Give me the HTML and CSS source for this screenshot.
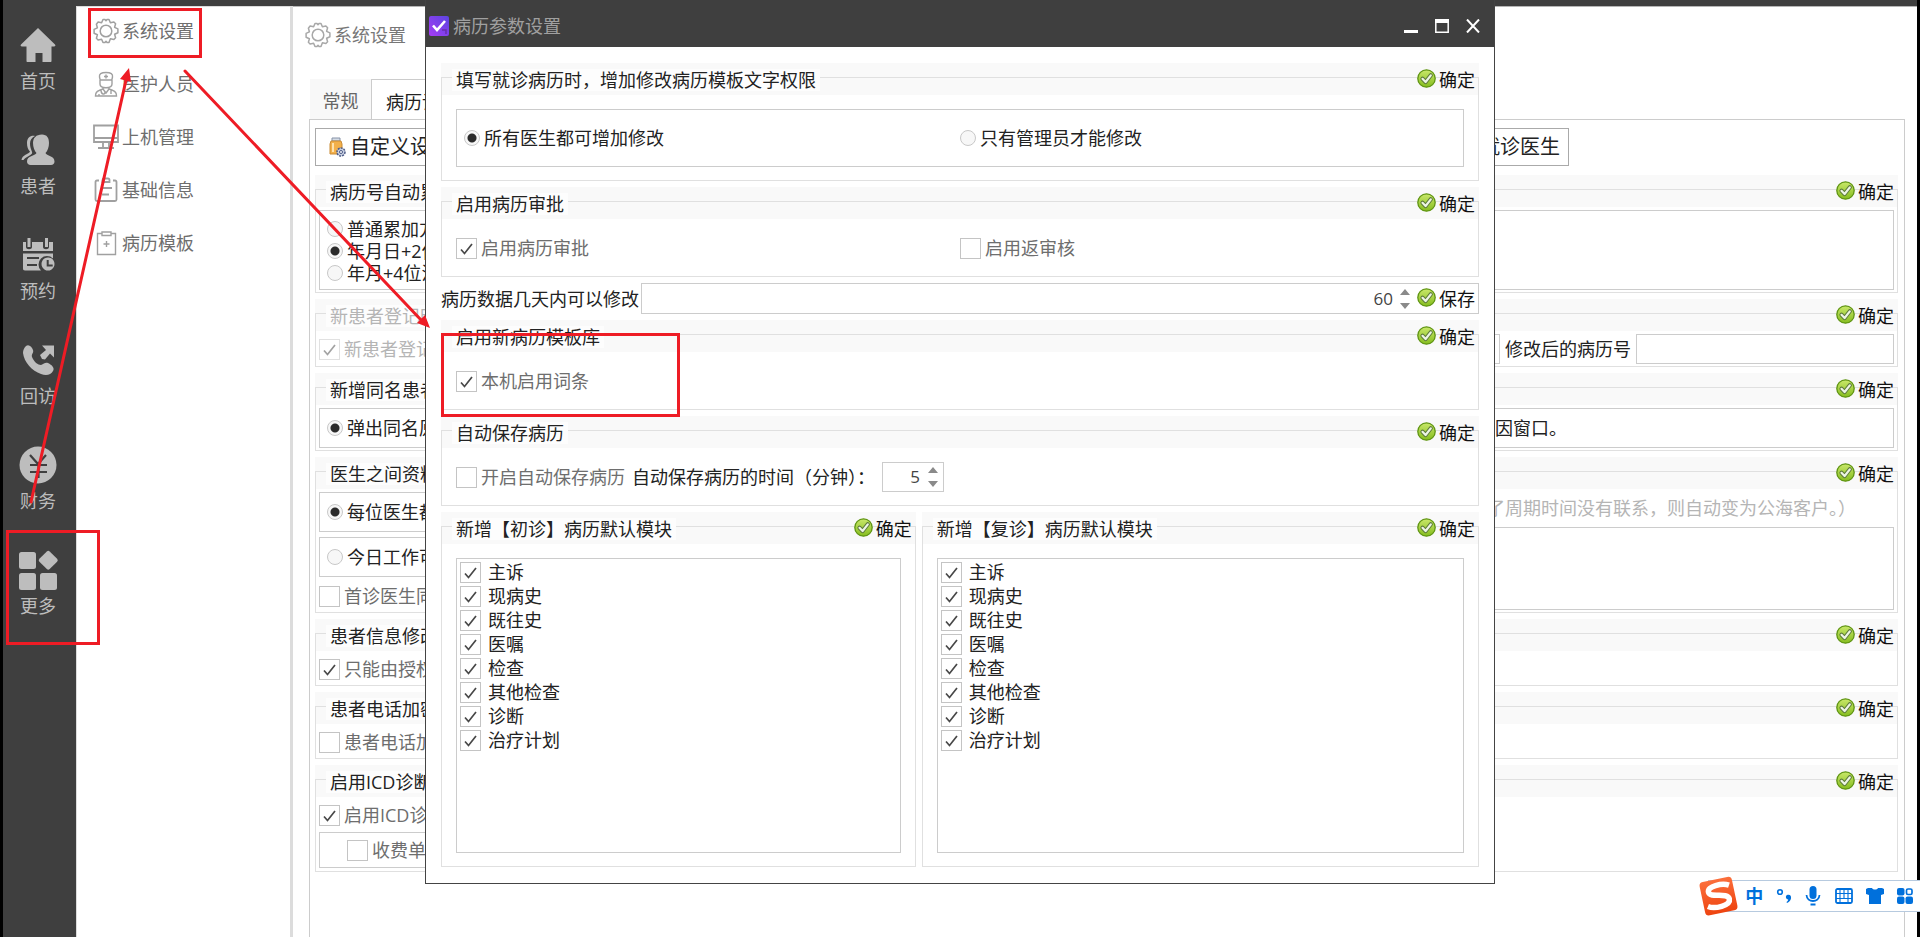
FILE: index.html
```html
<!DOCTYPE html>
<html lang="zh-CN">
<head>
<meta charset="utf-8">
<title>病历参数设置</title>
<link rel="stylesheet" href="styles.css">
</head>
<body>
<svg class="defs" aria-hidden="true">
  <defs>
    <linearGradient id="okfill" x1="0" y1="0" x2="0" y2="1">
      <stop offset="0" stop-color="#c9e86a"/><stop offset="1" stop-color="#86bd1f"/>
    </linearGradient>
    <linearGradient id="appfill" x1="1" y1="0" x2="0" y2="1">
      <stop offset="0" stop-color="#5b45e0"/><stop offset="1" stop-color="#a63cf5"/>
    </linearGradient>
    <linearGradient id="imefill" x1="0" y1="0" x2="0" y2="1">
      <stop offset="0" stop-color="#fb6f3c"/><stop offset="1" stop-color="#ee4410"/>
    </linearGradient>
    <symbol id="ok" viewBox="0 0 19 19">
      <circle cx="9.500" cy="9.500" r="8.700" fill="url(#okfill)" stroke="#5f9413" stroke-width="1.300"/>
      <path d="M5.500 9.800 8.600 13 13.800 6.300" fill="none" stroke="#5c7a3c" stroke-width="4.200" stroke-linecap="round" stroke-linejoin="round"/>
      <path d="M5.500 9.800 8.600 13 13.800 6.300" fill="none" stroke="#edf5e4" stroke-width="2.200" stroke-linecap="round" stroke-linejoin="round"/>
    </symbol>
    <symbol id="gear" viewBox="0 0 26 26">
      <g fill="none" stroke="currentColor" stroke-width="1.500" stroke-linejoin="round">
        <path d="M10 1.500h2l1 1.200 1-1.200h2l1.400 3.300 3.500-.8 1.700 1.700-1 3.600 3.300 1.600v3.800l-3.300 1.500 1 3.600-1.700 1.700-3.500-.8L16 24.500h-2l-1-1.200-1 1.200h-2l-1.400-3.300-3.500.8-1.700-1.700 1-3.600-3.300-1.500v-3.800l3.300-1.600-1-3.600L5.100 4l3.500.8z"/>
        <circle cx="13" cy="13" r="5.800"/>
      </g>
    </symbol>
    <symbol id="spin" viewBox="0 0 10 22">
      <path d="M0 7 5 1l5 6zM0 15h10l-5 6z" fill="#8a8a8a"/>
    </symbol>
  </defs>
</svg>

<div class="app">
  <nav class="rail" aria-label="主导航">
    <button type="button"><svg width="38" height="38" viewBox="0 0 38 38"><path d="M19 2 36 18.500c.8 1 .3 2-1 2h-2.500V35c0 .6-.4 1-1 1h-8v-9h-7v9h-8c-.6 0-1-.4-1-1V20.500H3c-1.300 0-1.800-1-1-2z"/></svg>首页</button>
    <button type="button"><svg width="38" height="38" viewBox="0 0 38 38"><path d="M16 5c-4-1-8 1.500-8 7 0 4 1 6.500 3 8.500-1 3-8 3-8.500 8.500h2c2-3 7-4.500 8.500-6.500 1-1.500-2-4.500-2-10 0-3.500 2-6 5-7.500z"/><path d="M23 3.500c5 0 7 3.500 7 8.500 0 4-1.500 8-3.500 10 1 3 9 2.500 9 8.500 0 2-1.500 3.500-3.500 3.500H11.500c-2 0-3.500-1.500-3.500-3.500 0-6 8-5.500 9.500-8.500-2-2-3.500-6-3.500-10 0-5 3-8.500 9-8.500z"/></svg>患者</button>
    <button type="button"><svg width="38" height="38" viewBox="0 0 38 38"><path d="M4 6h3v5c0 3 6 3 6 0V6h11v5c0 3 6 3 6 0V6h4v9H4zM4 17.500h30v5a8 8 0 0 0-12 12H6c-1.500 0-2-1-2-2zM8 21v2h12v-2zm0 7v2h10v-2z" fill-rule="evenodd"/><path d="M8.500 2h3v9h-3zM26 2h3v9h-3z"/><path d="M29 21.500a6.500 6.500 0 1 0 .01 0zm-1.300 2.500h2v4.500h4v2h-6z" fill-rule="evenodd"/></svg>预约</button>
    <button type="button"><svg width="38" height="38" viewBox="0 0 38 38"><path d="M7 5c3-2 6 1 7 4s-2 4-1 7c2 5 6 8 9 8 3-1 4-3 7-2 4 2 7 5 5 8-2 4-7 5-12 3C13 30 5 21 4 12c0-3 1-5 3-7z"/><path d="m21 14 6-5-4-4.500h12v12l-4-4-5 6-3-.5z"/></svg>回访</button>
    <button type="button"><svg width="38" height="38" viewBox="0 0 38 38"><circle cx="19" cy="19" r="18.500"/><path d="M11 9l8 9 8-9M11 19h17M11 26h17M19.500 18v14" fill="none" stroke="#3f3f3f" stroke-width="2.200"/></svg>财务</button>
    <button type="button"><svg width="38" height="38" viewBox="0 0 38 38"><rect x="0" y="1" width="17" height="17" rx="2.500"/><rect x="0" y="22" width="17" height="17" rx="2.500"/><rect x="21" y="22" width="17" height="17" rx="2.500"/><rect x="22" y="2" width="14.500" height="14.500" rx="2" transform="rotate(45 29.250 9.250)"/></svg>更多</button>
  </nav>

  <nav class="menu" aria-label="更多">
    <button type="button"><svg width="26" height="26"><use href="#gear"/></svg>系统设置</button>
    <button type="button"><svg width="26" height="26" viewBox="0 0 26 26"><path d="M6.500 6C6 3 8 1.500 13 1.500S20 3 19.500 6l-.7 3H7.200zM7 9v4c0 5 12 5 12 0V9M13 3.500v4M11 5.500h4M10 16v2l-4 1.500C3 20.500 2.500 22 2.500 25h21c0-3-.5-4.500-3.500-5.500L16 18v-2M8 19c0 5 4 5 4 2M18 19v4M6 25v-2M10 18l3 4 3-4"/></svg>医护人员</button>
    <button type="button"><svg width="26" height="26" viewBox="0 0 26 26"><path d="M1 1.500h24V18H1zM1 14h24M10 18v5M16 18v5M5 24h16" stroke-width="1.800"/></svg>上机管理</button>
    <button type="button"><svg width="26" height="26" viewBox="0 0 26 26"><path d="M6 3.500H4C3 3.500 2.500 4 2.500 5v17.500c0 1 .5 1.500 1.500 1.500h18c1 0 1.500-.5 1.500-1.500V5c0-1-.5-1.500-1.500-1.500h-2M9.500 5h7V3c0-1-.5-1.500-1.500-1.500h-4c-1 0-1.500.5-1.500 1.500zM9 11h10M9 17.500h7" stroke-width="1.800"/></svg>基础信息</button>
    <button type="button"><svg width="26" height="26" viewBox="0 0 26 26"><path d="M9 3.500H4.500V24.500h18V3.500H18M9 2h9v3.500H9zM13.500 11v6M10.500 14h6"/></svg>病历模板</button>
  </nav>

  <main class="main">
    <h1 class="crumb"><svg width="26" height="26"><use href="#gear"/></svg>系统设置</h1>
    <div class="tabs" role="tablist">
      <button type="button" role="tab" aria-selected="false">常规</button>
      <button type="button" role="tab" aria-selected="true">病历设置</button>
    </div>
    <div class="panel">
      <div class="actions">
        <button type="button" class="big"><svg width="17" height="20" viewBox="0 0 17 20"><path d="M3 1h8v3H3z" fill="#d5dce6" stroke="#8793a8"/><path d="M2 4h10l1 3v10H1V7z" fill="#f3b04a" stroke="#c98b35"/><path d="M4 6v9" stroke="#ffe2ad" stroke-width="2"/><circle cx="12" cy="15" r="4" fill="#c8d0e2" stroke="#4c5a86" stroke-width="1.500" stroke-dasharray="2 1"/><circle cx="12" cy="15" r="1.500" fill="#fff" stroke="#4c5a86"/></svg>自定义设置</button>
        <button type="button" class="big doctor">就诊医生</button>
      </div>

      <section class="group">
        <header><h2>病历号自动累加</h2><button type="button" class="ok"><svg width="19" height="19"><use href="#ok"/></svg>确定</button></header>
        <div class="body"><div class="box radios">
          <label><input type="radio" name="no">普通累加方式</label>
          <label><input type="radio" name="no" checked>年月日+2位</label>
          <label><input type="radio" name="no">年月+4位流</label>
        </div></div>
      </section>

      <section class="group">
        <header class="off"><h2>新患者登记时</h2><button type="button" class="ok"><svg width="19" height="19"><use href="#ok"/></svg>确定</button></header>
        <div class="body line">
          <label class="check off"><input type="checkbox" checked disabled>新患者登记</label>
          <div class="fields">
            <input type="text" class="field old" aria-label="修改前的病历号">
            <label for="newno">修改后的病历号</label>
            <input type="text" class="field new" id="newno">
          </div>
        </div>
      </section>

      <section class="group">
        <header><h2>新增同名患者</h2><button type="button" class="ok"><svg width="19" height="19"><use href="#ok"/></svg>确定</button></header>
        <div class="body"><div class="box row40">
          <label><input type="radio" name="same" checked>弹出同名原</label><span class="tail">因窗口。</span>
        </div></div>
      </section>

      <section class="group">
        <header><h2>医生之间资料</h2><button type="button" class="ok"><svg width="19" height="19"><use href="#ok"/></svg>确定</button></header>
        <div class="body halves">
          <div class="stack">
            <div class="box row40"><label><input type="radio" name="share" checked>每位医生都</label></div>
            <div class="box row40"><label><input type="radio" name="share">今日工作可</label></div>
            <label class="check"><input type="checkbox">首诊医生同</label>
          </div>
          <div class="note"><p>了周期时间没有联系，则自动变为公海客户。）</p><div class="box"></div></div>
        </div>
      </section>

      <section class="group">
        <header><h2>患者信息修改</h2><button type="button" class="ok"><svg width="19" height="19"><use href="#ok"/></svg>确定</button></header>
        <div class="body single"><label class="check"><input type="checkbox" checked>只能由授权</label></div>
      </section>

      <section class="group">
        <header><h2>患者电话加密</h2><button type="button" class="ok"><svg width="19" height="19"><use href="#ok"/></svg>确定</button></header>
        <div class="body single"><label class="check"><input type="checkbox">患者电话加</label></div>
      </section>

      <section class="group">
        <header><h2>启用ICD诊断</h2><button type="button" class="ok"><svg width="19" height="19"><use href="#ok"/></svg>确定</button></header>
        <div class="body single">
          <label class="check"><input type="checkbox" checked>启用ICD诊</label>
          <div class="box sub"><label class="check"><input type="checkbox">收费单</label></div>
        </div>
      </section>
    </div>
  </main>
</div>

<div class="dialog" role="dialog" aria-labelledby="dlg-title">
  <div class="titlebar">
    <svg width="20" height="20" viewBox="0 0 20 20"><rect width="20" height="20" rx="2" fill="url(#appfill)"/><path d="M13 14h4v4" fill="none" stroke="#6a2cae" stroke-width="1.500"/><path d="m4 9.500 4 4.500 8-9" fill="none" stroke="#fff" stroke-width="2.600"/></svg>
    <h2 id="dlg-title">病历参数设置</h2>
    <div class="winbtns">
      <button type="button" aria-label="最小化"><svg width="14" height="14" viewBox="0 0 14 14"><path d="M0 12.500h14" stroke-width="3"/></svg></button>
      <button type="button" aria-label="最大化"><svg width="14" height="14" viewBox="0 0 14 14"><path d="M.8 1v12.200h12.400V1" stroke-width="1.500"/><path d="M0 2h14" stroke-width="4"/></svg></button>
      <button type="button" aria-label="关闭"><svg width="14" height="14" viewBox="0 0 14 14"><path d="m1 .5 12 13M13 .5l-12 13" stroke-width="2"/></svg></button>
    </div>
  </div>

  <form class="content">
    <section class="group">
      <header><h3>填写就诊病历时，增加修改病历模板文字权限</h3><button type="button" class="ok"><svg width="19" height="19"><use href="#ok"/></svg>确定</button></header>
      <div class="pad"><div class="box perms">
        <label><input type="radio" name="perm" checked>所有医生都可增加修改</label>
        <label><input type="radio" name="perm">只有管理员才能修改</label>
      </div></div>
    </section>

    <section class="group">
      <header><h3>启用病历审批</h3><button type="button" class="ok"><svg width="19" height="19"><use href="#ok"/></svg>确定</button></header>
      <div class="pad checks">
        <label class="check"><input type="checkbox" checked>启用病历审批</label>
        <label class="check"><input type="checkbox">启用返审核</label>
      </div>
    </section>

    <div class="days">
      <label for="days">病历数据几天内可以修改</label>
      <div class="daybox">
        <input type="number" id="days" value="60">
        <svg width="10" height="22"><use href="#spin"/></svg>
        <button type="button" class="ok"><svg width="19" height="19"><use href="#ok"/></svg>保存</button>
      </div>
    </div>

    <section class="group">
      <header><h3>启用新病历模板库</h3><button type="button" class="ok"><svg width="19" height="19"><use href="#ok"/></svg>确定</button></header>
      <div class="pad checks"><label class="check"><input type="checkbox" checked>本机启用词条</label></div>
    </section>

    <section class="group">
      <header><h3>自动保存病历</h3><button type="button" class="ok"><svg width="19" height="19"><use href="#ok"/></svg>确定</button></header>
      <div class="pad auto">
        <label class="check"><input type="checkbox">开启自动保存病历</label>
        <label for="mins">自动保存病历的时间（分钟）：</label>
        <div class="minbox"><input type="number" id="mins" value="5"><svg width="10" height="22"><use href="#spin"/></svg></div>
      </div>
    </section>

    <div class="lists">
      <section class="group">
        <header><h3>新增【初诊】病历默认模块</h3><button type="button" class="ok"><svg width="19" height="19"><use href="#ok"/></svg>确定</button></header>
        <div class="pad"><div class="box list">
          <label><input type="checkbox" checked>主诉</label>
          <label><input type="checkbox" checked>现病史</label>
          <label><input type="checkbox" checked>既往史</label>
          <label><input type="checkbox" checked>医嘱</label>
          <label><input type="checkbox" checked>检查</label>
          <label><input type="checkbox" checked>其他检查</label>
          <label><input type="checkbox" checked>诊断</label>
          <label><input type="checkbox" checked>治疗计划</label>
        </div></div>
      </section>
      <section class="group">
        <header><h3>新增【复诊】病历默认模块</h3><button type="button" class="ok"><svg width="19" height="19"><use href="#ok"/></svg>确定</button></header>
        <div class="pad"><div class="box list">
          <label><input type="checkbox" checked>主诉</label>
          <label><input type="checkbox" checked>现病史</label>
          <label><input type="checkbox" checked>既往史</label>
          <label><input type="checkbox" checked>医嘱</label>
          <label><input type="checkbox" checked>检查</label>
          <label><input type="checkbox" checked>其他检查</label>
          <label><input type="checkbox" checked>诊断</label>
          <label><input type="checkbox" checked>治疗计划</label>
        </div></div>
      </section>
    </div>
  </form>
</div>

<div class="ime">
  <svg class="imelogo" width="42" height="42" viewBox="0 0 42 42">
    <g transform="rotate(-12 21 21)"><rect x="4" y="4" width="33" height="34" rx="4" fill="url(#imefill)"/>
    <path d="M33 12.500C27 9 11 8.500 11.500 15.500 12 21.500 30.500 18.500 30.500 26 30.500 33 14 33 8 29" fill="none" stroke="#fff" stroke-width="5.500"/></g>
  </svg>
  <span class="zh">中</span>
  <svg width="16" height="18" viewBox="0 0 16 18"><circle cx="4" cy="5" r="2.300" fill="none" stroke="#0070dc" stroke-width="1.600"/><path d="M11 8c3-1 4.500 1 4 3.500-.5 2-2 3.500-4 4.500l-.5-1c1-.7 1.700-1.500 1.700-2.500C10 12.500 9 9 11 8z" fill="#0070dc"/></svg>
  <svg width="16" height="20" viewBox="0 0 16 20"><rect x="4.500" y="0" width="7" height="13" rx="3.500" fill="#0070dc"/><path d="M1.500 9c.5 8 12.500 8 13 0M5.500 18.500h5" fill="none" stroke="#0070dc" stroke-width="1.800"/></svg>
  <svg width="18" height="16" viewBox="0 0 18 16"><rect x="1" y="1" width="16" height="14" rx="1.500" fill="none" stroke="#0070dc" stroke-width="1.800"/><path d="M1 5.500h16M1 10.500h16M5 1v14M9 1v9.500M13 1v14" fill="none" stroke="#0070dc" stroke-width="1.100"/></svg>
  <svg width="18" height="18" viewBox="0 0 18 18"><path d="M0 2l2-1h4c1 2 5 2 6 0h4l2 1v5l-3 1v9H3V8L0 7z" fill="#0070dc"/></svg>
  <svg width="16" height="16" viewBox="0 0 16 16"><rect width="7.500" height="7.500" rx="2" fill="#0070dc"/><rect y="8.500" width="7.500" height="7.500" rx="2" fill="#0070dc"/><rect x="8.500" y="8.500" width="7.500" height="7.500" rx="2" fill="#0070dc"/><rect x="9.500" y="1" width="5.500" height="5.500" rx="1.500" fill="none" stroke="#0070dc" stroke-width="1.700"/></svg>
</div>

<svg class="marks" aria-hidden="true">
  <g fill="none" stroke="#ee1c25" stroke-width="3">
    <rect x="89.500" y="9.500" width="111" height="47"/>
    <rect x="7.500" y="531.500" width="91" height="112"/>
    <rect x="442.500" y="334.500" width="236" height="81"/>
    <path d="M31 502 126.500 78M185 71 422 321" stroke-linecap="round"/>
  </g>
  <path d="M129 68l2 14-11-3zM430 328l-13-5 8-8z" fill="#ee1c25"/>
</svg>
</body>
</html>
```
FILE: styles.css
```css
* { box-sizing: border-box; }

body {
  margin: 0;
  height: 100vh;
  overflow: hidden;
  position: relative;
  background: #3f3f3f;
  font: 18px/22px "Open Sans", "Noto Sans CJK SC", sans-serif;
  color: #222;
}

h1, h2, h3, p { margin: 0; font: inherit; }
svg { flex: none; display: block; }
button { font: inherit; color: inherit; background: none; border: 0; padding: 0; margin: 0; }
input { font: inherit; color: inherit; margin: 0; }
.defs { position: absolute; width: 0; height: 0; }

/* Application frame */
.app {
  display: flex;
  height: 100vh;
  padding-top: 6px;
  border-left: 3px solid #000;
  border-right: 3px solid #000;
}

.rail { width: 73px; flex: none; display: flex; flex-direction: column; padding-right: 3px; color: #bdbdbd; }
.rail svg { fill: #bdbdbd; overflow: visible; }
.rail button {
  display: flex;
  flex-direction: column;
  align-items: center;
  gap: 6px;
  padding: 20px 0 19px;
}

.menu {
  width: 217px;
  flex: none;
  background: #fff;
  border: solid #dcdcdc;
  border-width: 1px 3px 0 1px;
  display: flex;
  flex-direction: column;
  gap: 27px;
  padding: 11px 16px;
  color: #6e6e6e;
}
.menu button { display: flex; align-items: center; gap: 3px; }
.menu svg { fill: none; stroke: #a0a0a0; stroke-width: 1.4; color: #a0a0a0; }

.main {
  flex: 1;
  min-width: 0;
  background: #fff;
  border-top: 1px solid #b5b5b5;
  padding: 0 12px 0 16px;
  display: flex;
  flex-direction: column;
}
.crumb {
  display: flex;
  align-items: flex-start;
  gap: 3px;
  height: 72px;
  padding-top: 15px;
  line-height: 26px;
  color: #777;
}
.crumb svg { color: #a8a8a8; margin-left: -4px; }

.tabs { display: flex; height: 40px; padding-left: 1px; }
.tabs button { width: 61px; background: #f8f8f8; color: #666; padding-top: 3px; }
.tabs [aria-selected="true"] {
  width: 102px;
  background: #fff;
  color: #222;
  border: 1px solid #ccc;
  border-bottom: 0;
  margin-bottom: -1px;
}

.panel {
  flex: 1;
  border: 1px solid #ccc;
  border-bottom: 0;
  padding: 8px 6px 0 5px;
  display: flex;
  flex-direction: column;
  gap: 6px;
}

.actions { display: flex; justify-content: space-between; padding-bottom: 3px; }
.big {
  height: 38px;
  border: 1px solid #aaa;
  background: #fff;
  font-size: 20px;
  display: flex;
  align-items: center;
  gap: 4px;
  padding: 0 8px 0 13px;
}
.doctor { margin-right: 329px; }

/* Titled groups */
.group {
  position: relative;
  background: linear-gradient(#f9f9f9, #f9f9f9) 0 0 / 100% 32px no-repeat;
}
.group::before {
  content: "";
  position: absolute;
  inset: 14px 0 0 0;
  border: 1px solid #e0e0e0;
  pointer-events: none;
}
.group > * { position: relative; }
.group > header {
  height: 32px;
  display: flex;
  align-items: center;
  justify-content: space-between;
  padding: 2px 4px 0 11px;
}
.group h2, .group h3 { background: #fdfdfd; padding: 0 4px; }
.off h2, .off.check { color: #b5b5b5; }
.ok { display: flex; align-items: center; gap: 3px; color: #111; }
.ok svg { margin-bottom: 3px; }

.body { padding: 3px 4px; }
.box { border: 1px solid #ccc; background: #fff; }
label { display: flex; align-items: center; gap: 4px; white-space: nowrap; }
.check { color: #6e6e6e; }

.radios { height: 80px; padding: 7px; }
.row40 { height: 40px; padding: 0 7px; display: flex; align-items: center; justify-content: space-between; }
.tail { margin-right: 319px; }
.line { display: flex; align-items: center; justify-content: space-between; }
.fields { display: flex; align-items: center; gap: 5px; }
.field { height: 30px; border: 1px solid #ccc; background: #fff; }
.old { width: 200px; }
.new { width: 258px; }
.halves { display: grid; grid-template-columns: 1fr 1fr; gap: 6px; }
.stack { display: flex; flex-direction: column; gap: 5px; }
.stack .check { padding: 3px 0; }
.note { display: flex; flex-direction: column; }
.note p { text-align: right; padding: 5px 38px 8px 0; color: #b5b5b5; white-space: nowrap; }
.note .box { flex: 1; }
.single { padding: 7px 4px 4px; }
.single > .check { margin-bottom: 2px; }
.sub { width: 50%; padding: 6px 27px; margin-top: 6px; }

input[type="checkbox"], input[type="radio"] { appearance: none; flex: none; background: #fff; }
input[type="checkbox"] { width: 21px; height: 21px; border: 1px solid #c4c4c4; }
input[type="checkbox"]:checked {
  background: #fff url("data:image/svg+xml,%3Csvg xmlns='http://www.w3.org/2000/svg' viewBox='0 0 19 19'%3E%3Cpath d='M4 10.500 7.500 14.500 15 5' fill='none' stroke='%23484848' stroke-width='1.700'/%3E%3C/svg%3E");
}
input[type="checkbox"]:disabled { opacity: .5; }
input[type="radio"] { width: 16px; height: 16px; border: 1px solid #c8c8c8; border-radius: 50%; background: #f7f7f7; }
input[type="radio"]:checked { background: radial-gradient(circle, #2b2b2b 4px, #f7f7f7 5px); }
input[type="number"] { appearance: textfield; border: 0; background: none; text-align: right; min-width: 0; padding: 0; font-size: 17px; color: #444; }
input[type="number"]::-webkit-inner-spin-button { appearance: none; }

/* Dialog window */
.dialog {
  position: absolute;
  z-index: 1;
  top: 0;
  left: 425px;
  right: 425px;
  background: #fff;
  border: 1px solid #444;
  border-top: 0;
}
.titlebar {
  display: flex;
  align-items: center;
  gap: 4px;
  height: 47px;
  padding: 5px 14px 0 3px;
  background: #3f3f3f;
  color: #a0a0a0;
}
.winbtns { margin-left: auto; display: flex; gap: 17px; }
.winbtns svg { fill: none; stroke: #fff; }

.content { padding: 16px 15px; display: flex; flex-direction: column; gap: 6px; }
.pad { padding: 14px 15px; }
.perms { display: grid; grid-template-columns: 1fr 1fr; padding: 17px 7px; }
.checks { display: grid; grid-template-columns: 1fr 1fr; padding: 18px 15px; }
.days { display: flex; align-items: center; gap: 2px; }
.daybox {
  flex: 1;
  height: 31px;
  border: 1px solid #ccc;
  display: flex;
  align-items: center;
  gap: 7px;
  padding-right: 3px;
}
.daybox input { flex: 1; }
.auto { display: flex; align-items: center; gap: 7px; }
.minbox { width: 62px; height: 30px; border: 1px solid #ccc; display: flex; align-items: center; gap: 8px; padding-right: 5px; }
.minbox input { flex: 1; }
.lists { display: grid; grid-template-columns: 46fr 54fr; gap: 6px; }
.list { height: 295px; padding: 1px 3px; }
.list label { height: 24px; gap: 7px; }

/* Input method toolbar */
.ime {
  position: absolute;
  z-index: 1;
  right: 0;
  bottom: 25px;
  height: 32px;
  width: 212px;
  background: #fff;
  border: 1px solid #b7cadf;
  border-right: 0;
  display: flex;
  align-items: center;
  justify-content: space-between;
  padding: 0 7px 0 0;
}
.imelogo { margin: 0 -8px 0 -11px; }
.zh { color: #0070dc; font-weight: 700; }

.marks { position: absolute; z-index: 2; inset: 0; width: 100%; height: 100%; pointer-events: none; }
```
